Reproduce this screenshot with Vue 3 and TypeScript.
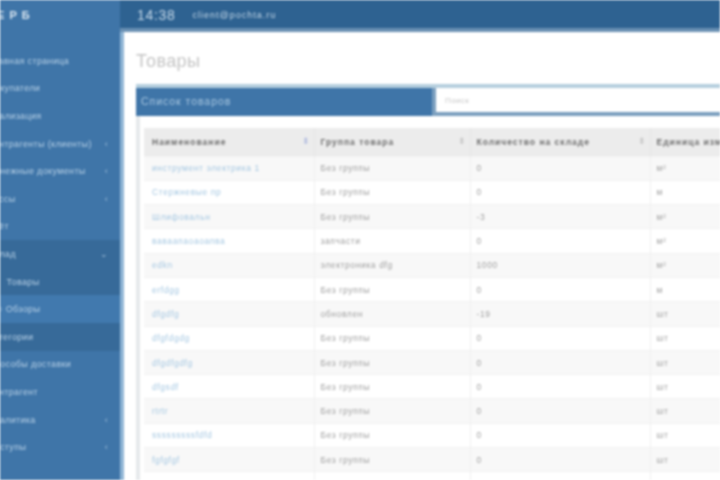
<script setup lang="ts">
interface NavItem { label: string; chev?: string; cls?: string }
const nav: NavItem[] = [
  { label: 'Главная страница' },
  { label: 'Покупатели' },
  { label: 'Реализация' },
  { label: 'Контрагенты (клиенты)', chev: '‹' },
  { label: 'Денежные документы', chev: '‹' },
  { label: 'Кассы', chev: '‹' },
  { label: 'Учёт' },
  { label: 'Склад', chev: '⌄', cls: 'open' },
  { label: 'Ц    Товары', cls: 'open' },
  { label: '○ Обзоры', cls: 'active' },
  { label: 'Категории', cls: 'open' },
  { label: 'Способы доставки' },
  { label: 'Контрагент' },
  { label: 'Аналитика', chev: '‹' },
  { label: 'Доступы', chev: '‹' },
]
const rows: [string, string, string, string][] = [
  ['инструмент электрика 1', 'Без группы', '0', 'м²'],
  ['Стержневые пр', 'Без группы', '0', 'м'],
  ['Шлифовальн', 'Без группы', '-3', 'м²'],
  ['ваваапаоаоапва', 'запчасти', '0', 'м²'],
  ['edkn', 'электроника dfg', '1000', 'м²'],
  ['erfdgg', 'Без группы', '0', 'м'],
  ['dfgdfg', 'обновлен', '-19', 'шт'],
  ['dfgfdgdg', 'Без группы', '0', 'шт'],
  ['dfgdfgdfg', 'Без группы', '0', 'шт'],
  ['dfgsdf', 'Без группы', '0', 'шт'],
  ['rtrtr', 'Без группы', '0', 'шт'],
  ['sssssssssfdfd', 'Без группы', '0', 'шт'],
  ['fgfgfgf', 'Без группы', '0', 'шт'],
  ['', '', '', ''],
]
</script>

<template>
  <div class="app">
    <aside class="sidebar">
      <div class="logo">Е Р Б</div>
      <nav class="nav">
        <div v-for="(n, i) in nav" :key="i" class="item" :class="n.cls">
          <span class="label">{{ n.label }}</span>
          <span v-if="n.chev" class="chev">{{ n.chev }}</span>
        </div>
      </nav>
    </aside>
    <div class="main">
      <header class="topbar">
        <span class="time">14:38</span>
        <span class="mail">client@pochta.ru</span>
      </header>
      <main class="content">
        <h1 class="title">Товары</h1>
        <section class="panel">
          <div class="panel-head">
            <span class="panel-title">Список товаров</span>
            <div class="search-wrap"><input class="search" placeholder="Поиск" /></div>
          </div>
          <div class="panel-body">
            <table class="grid">
              <colgroup>
                <col class="c1" /><col class="c2" /><col class="c3" /><col class="c4" />
              </colgroup>
              <thead>
                <tr>
                  <th><span>Наименование</span><i class="sort on">⬍</i></th>
                  <th><span>Группа товара</span><i class="sort">⬍</i></th>
                  <th><span>Количество на складе</span><i class="sort">⬍</i></th>
                  <th><span>Единица измерения</span></th>
                </tr>
              </thead>
              <tbody>
                <tr v-for="(r, i) in rows" :key="i">
                  <td class="link">{{ r[0] }}</td>
                  <td>{{ r[1] }}</td>
                  <td>{{ r[2] }}</td>
                  <td>{{ r[3] }}</td>
                </tr>
              </tbody>
            </table>
          </div>
        </section>
      </main>
    </div>
  </div>
</template>

<style>
html, body { margin: 0; background: #fff; overflow: hidden; }
</style>

<style scoped>
.app {
  width: 720px; height: 480px; display: flex; overflow: hidden;
  font-family: "Liberation Sans", Arial, sans-serif;
  filter: blur(0.9px);
}
.sidebar { width: 120px; flex: none; background: #3f75a8; overflow: hidden; color: #b7d0e6; }
.logo { height: 32px; box-sizing: border-box; padding-top: 9px; margin-left: -3px; color: #dbe7f1; font-size: 11px; font-weight: 700; letter-spacing: 1px; white-space: pre; }
.nav { padding-top: 15px; }
.item {
  height: 27.6px; display: flex; align-items: center; justify-content: space-between;
  padding-right: 12px; font-size: 9px; letter-spacing: 0.35px; white-space: pre;
}
.label { margin-left: -12px; }
.item.open { background: #376a99; }
.item.active { background: #4179ae; }
.item.active .label { margin-left: -3px; }
.chev { font-size: 9px; color: #a5c2dc; }
.main { flex: 1; min-width: 0; display: flex; flex-direction: column; }
.topbar {
  height: 28px; flex: none; background: #2e6291; border-bottom: 4px solid #6a90b3;
  display: flex; align-items: center; padding-left: 17px; gap: 17px; color: #c5d8e8;
}
.time { font-size: 14px; letter-spacing: 0.7px; margin-top: 2px; }
.mail { font-size: 9px; letter-spacing: 1px; margin-top: 2px; }
.content { flex: 1; background: #fff; border-left: 4px solid #8fb4d4; padding-left: 12px; overflow: hidden; }
.title { margin: 17px 0 0; height: 35px; font-size: 18px; line-height: 24px; font-weight: 400; color: #c4c4c4; letter-spacing: 0.4px; }
.panel { border-top: 4px solid #b6cfde; }
.panel-head { height: 28px; background: #3f75a8; display: flex; color: #a9c7e0; }
.panel-title { width: 296px; box-sizing: border-box; flex: none; padding-left: 5px; font-size: 10.5px; line-height: 27px; letter-spacing: 0.95px; }
.search-wrap { flex: 1; background: #7b9fbf; border-left: 4px solid #7b9fbf; padding-bottom: 4px; }
.search {
  display: block; width: 100%; height: 24px; box-sizing: border-box; border: 0; padding: 0 9px;
  background: #fff; font: 8px "Liberation Sans", Arial, sans-serif; outline: none;
}
.search::placeholder { color: #c8c8c8; letter-spacing: 0.4px; }
.panel-body { border-left: 4px solid #e6e9eb; padding: 12px 0 0 4px; }
.grid { border-collapse: collapse; table-layout: fixed; width: 640px; font-size: 8.5px; }
.c1 { width: 170px; } .c2 { width: 156px; } .c3 { width: 180px; } .c4 { width: 134px; }
th {
  height: 28px; padding: 0 6px; box-sizing: border-box; background: #ececec; color: #6e6e6e; font-weight: 700;
  text-align: left; letter-spacing: 1px; border-right: 1px solid #e6e6e6; position: relative; white-space: nowrap;
}
th:first-child, td:first-child { padding-left: 8px; }
.sort { position: absolute; right: 3px; top: 8px; font-style: normal; font-size: 9px; color: #c8c8c8; font-weight: 400; }
.sort.on { color: #b5bfe0; }
td {
  height: 24.3px; padding: 0 6px; box-sizing: border-box; color: #a0a0a0; white-space: nowrap; letter-spacing: 0.6px;
  border-right: 1px solid #f0f0f0; border-top: 1px solid #f2f2f2;
}
td.link { color: #a6c8e2; }
tbody tr:nth-child(odd) td { background: #f8f8f8; }
</style>
